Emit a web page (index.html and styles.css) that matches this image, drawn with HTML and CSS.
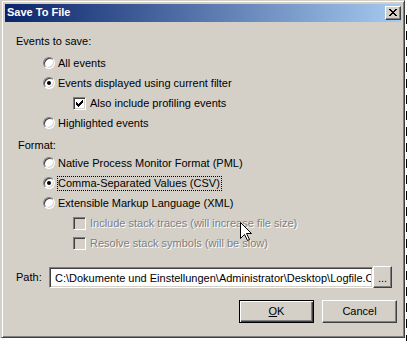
FILE: index.html
```html
<!DOCTYPE html>
<html>
<head>
<meta charset="utf-8">
<title>Save To File</title>
<link rel="stylesheet" href="styles.css">
</head>
<body>
<div class="window">
  <div class="titlebar">
    <span class="title">Save To File</span>
    <span class="close">
      <svg width="8" height="7" viewBox="0 0 8 7" shape-rendering="crispEdges">
        <path d="M0 0h2v1h-2zM6 0h2v1h-2zM1 1h2v1h-2zM5 1h2v1h-2zM2 2h4v1h-4zM3 3h2v1h-2zM2 4h4v1h-4zM1 5h2v1h-2zM5 5h2v1h-2zM0 6h2v1h-2zM6 6h2v1h-2z" fill="#000"/>
      </svg>
    </span>
  </div>
  <div class="content">
    <div class="group-label">Events to save:</div>
    <div class="options">
      <div class="row"><span class="radio"></span><span>All events</span></div>
      <div class="row"><span class="radio checked"></span><span>Events displayed using current filter</span></div>
      <div class="row sub"><span class="check"><svg width="7" height="7" viewBox="0 0 7 7" shape-rendering="crispEdges"><path d="M6 0h1v1h-1zM5 1h2v1h-2zM0 2h1v1h-1zM4 2h3v1h-3zM0 3h2v1h-2zM3 3h3v1h-3zM0 4h5v1h-5zM1 5h3v1h-3zM2 6h1v1h-1z" fill="#000"/></svg></span><span>Also include profiling events</span></div>
      <div class="row"><span class="radio"></span><span>Highlighted events</span></div>
    </div>
    <div class="group-label format">Format:</div>
    <div class="options tight">
      <div class="row"><span class="radio"></span><span>Native Process Monitor Format (PML)</span></div>
      <div class="row"><span class="radio checked"></span><span class="focus">Comma-Separated Values (CSV)</span></div>
      <div class="row"><span class="radio"></span><span>Extensible Markup Language (XML)</span></div>
      <div class="row sub disabled"><span class="check"></span><span>Include stack traces (will increase file size)</span></div>
      <div class="row sub disabled"><span class="check"></span><span>Resolve stack symbols (will be slow)</span></div>
    </div>
    <div class="path-row">
      <span class="path-label">Path:</span>
      <input class="path-input" type="text" value="C:\Dokumente und Einstellungen\Administrator\Desktop\Logfile.CSV">
      <span class="btn browse">...</span>
    </div>
    <div class="buttons">
      <span class="btn default"><u>O</u>K</span>
      <span class="btn">Cancel</span>
    </div>
  </div>
</div>
<div class="backdrop"></div>
<svg class="cursor" width="12" height="19" viewBox="0 0 12 19">
  <path d="M0.5 0.5V16.5L4.5 12.5L7.5 18.5L9.5 17.5L6.5 11.5H11.5Z" fill="#fff" stroke="#000" stroke-width="1" stroke-linejoin="miter"/>
</svg>
</body>
</html>
```

FILE: styles.css
```css
* { box-sizing: border-box; }

html, body {
  margin: 0;
  background: #fff;
}

body {
  width: 408px;
  height: 341px;
  overflow: hidden;
  position: relative;
  display: flex;
  align-items: flex-start;
  font: 11px/13px "Liberation Sans", Arial, sans-serif;
  color: #000;
}

.window {
  margin-left: 1px;
  width: 404px;
  height: 338px;
  flex: none;
  background: #d4d0c8;
  border: 1px solid;
  border-color: #d4d0c8 #404040 #404040 #d4d0c8;
  box-shadow: inset 1px 1px 0 #fff, inset -1px -1px 0 #808080, -1px 0 0 #d4d0c8;
  padding: 3px;
  display: flex;
  flex-direction: column;
}

.backdrop {
  width: 1px;
  height: 338px;
  margin-left: 1px;
  margin-top: 12px;
  background: repeating-linear-gradient(to bottom, transparent 0 3px, #000 3px 12px, transparent 12px 16px);
}

.titlebar {
  height: 18px;
  flex: none;
  background: linear-gradient(to right, #0a246a, #a6caf0);
  display: flex;
  align-items: flex-start;
  padding: 2px 0 0 2px;
}

.title {
  flex: 1;
  color: #fff;
  font-weight: bold;
}

.close {
  width: 16px;
  height: 14px;
  background: #d4d0c8;
  border: 1px solid;
  border-color: #fff #404040 #404040 #fff;
  box-shadow: inset -1px -1px 0 #808080;
  display: flex;
  align-items: center;
  justify-content: center;
  padding-bottom: 1px;
}

.close svg { display: block; }

.content {
  flex: 1;
  display: flex;
  flex-direction: column;
}

.group-label {
  margin-top: 13px;
  padding-left: 11px;
}

.group-label.format {
  margin-top: 6px;
  padding-left: 13px;
}

.options {
  margin-top: 5px;
  padding-left: 38px;
}

.options.tight {
  margin-top: 1px;
}

.row {
  height: 20px;
  display: flex;
  align-items: center;
}

.row.sub {
  padding-left: 30px;
}

.radio {
  width: 12px;
  height: 12px;
  flex: none;
  margin-right: 3px;
  border-radius: 50%;
  background: #fff;
  border: 1px solid;
  border-color: #808080 #fff #fff #808080;
  box-shadow: inset 1px 1px 0 #404040, inset -1px -1px 0 #d4d0c8;
  display: flex;
  align-items: center;
  justify-content: center;
}

.radio.checked::after {
  content: "";
  width: 4px;
  height: 4px;
  border-radius: 50%;
  background: #000;
}

.check {
  width: 13px;
  height: 13px;
  flex: none;
  margin-right: 4px;
  background: #fff;
  border: 1px solid;
  border-color: #808080 #fff #fff #808080;
  box-shadow: inset 1px 1px 0 #404040, inset -1px -1px 0 #d4d0c8;
  padding: 2px;
}

.check svg { display: block; }

.disabled { color: #808080; text-shadow: 1px 1px 0 #fff; }
.disabled .check { background: #d4d0c8; }

.focus {
  outline: 1px dotted #000;
  padding: 0 1px 0 0;
}

.path-row {
  margin-top: 13px;
  height: 22px;
  display: flex;
  align-items: flex-start;
  padding-left: 11px;
}

.path-label {
  width: 33px;
  margin-top: 5px;
}

.path-input {
  width: 324px;
  height: 21px;
  margin: 1px 0 0 0;
  padding: 0 1px 0 5px;
  font: inherit;
  color: #000;
  background: #fff;
  border: 1px solid;
  border-color: #808080 #fff #fff #808080;
  box-shadow: inset 1px 1px 0 #404040, inset -1px -1px 0 #d4d0c8;
  outline: none;
}

.btn {
  width: 75px;
  height: 23px;
  background: #d4d0c8;
  border: 1px solid;
  border-color: #fff #404040 #404040 #fff;
  box-shadow: inset -1px -1px 0 #808080;
  display: flex;
  align-items: center;
  justify-content: center;
  color: #000;
}

.btn.browse {
  width: 19px;
  height: 22px;
  padding-top: 2px;
}

.btn.default {
  border-color: #000;
  box-shadow: inset 1px 1px 0 #fff, inset -1px -1px 0 #404040, inset -2px -2px 0 #808080;
}

.btn u { text-decoration: underline; }

.buttons {
  margin-top: 12px;
  display: flex;
  justify-content: flex-end;
  gap: 8px;
  padding-right: 4px;
}

.cursor {
  position: absolute;
  left: 240px;
  top: 222px;
}
```
